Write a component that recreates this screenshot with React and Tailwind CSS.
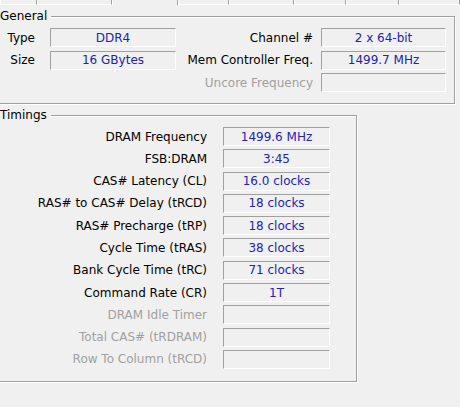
import React from "react";

const tabs = [
  { w: 37 },
  { w: 75 },
  { w: 66, active: true },
  { w: 51 },
  { w: 65 },
  { w: 52 },
  { w: 53 },
  { w: 61 },
];

const general = [
  { label: "Type", value: "DDR4", right: "Channel #", rightValue: "2 x 64-bit" },
  { label: "Size", value: "16 GBytes", right: "Mem Controller Freq.", rightValue: "1499.7 MHz" },
  { right: "Uncore Frequency", disabled: true },
];

const timings = [
  { label: "DRAM Frequency", value: "1499.6 MHz" },
  { label: "FSB:DRAM", value: "3:45" },
  { label: "CAS# Latency (CL)", value: "16.0 clocks" },
  { label: "RAS# to CAS# Delay (tRCD)", value: "18 clocks" },
  { label: "RAS# Precharge (tRP)", value: "18 clocks" },
  { label: "Cycle Time (tRAS)", value: "38 clocks" },
  { label: "Bank Cycle Time (tRC)", value: "71 clocks" },
  { label: "Command Rate (CR)", value: "1T" },
  { label: "DRAM Idle Timer", disabled: true },
  { label: "Total CAS# (tRDRAM)", disabled: true },
  { label: "Row To Column (tRCD)", disabled: true },
];

function Field({ value, className = "" }) {
  return (
    <div
      className={`h-[19px] border border-t-[#a0a0a0] border-l-[#a0a0a0] border-b-white border-r-white flex items-center justify-center text-[#2323b0] whitespace-nowrap ${className}`}
    >
      {value}
    </div>
  );
}

function GroupBox({ title, className = "", children }) {
  return (
    <div
      className={`relative ml-[-6px] pl-[5px] border border-[#a0a0a0] shadow-[inset_1px_1px_0_#fff,1px_1px_0_#fff] ${className}`}
    >
      <span className="absolute left-[5px] -top-[8px] bg-[#f0f0f0] pr-[4px] leading-[14px]">
        {title}
      </span>
      {children}
    </div>
  );
}

export default function App() {
  return (
    <div
      className="w-[460px] h-[407px] overflow-hidden bg-[#f0f0f0] text-[12px] text-black"
      style={{ fontFamily: '"DejaVu Sans", Verdana, sans-serif' }}
    >
      {/* tab strip, cut off at the top */}
      <div className="flex h-[5px]">
        {tabs.map((t, i) => (
          <div
            key={i}
            style={{ width: t.w }}
            className={`shrink-0 border-l border-r border-l-white border-r-[#a0a0a0] ${
              t.active ? "" : "border-b border-b-white"
            } ${i === 0 ? "border-l-transparent" : ""}`}
          />
        ))}
      </div>

      <GroupBox title="General" className="mt-[11px] w-[461px] pt-[11px] pb-[11px]">
        <div className="flex flex-col gap-y-[3.5px]">
          {general.map((r, i) => (
            <div key={i} className="flex items-center h-[19px]">
              <div className="w-[35px] text-right">{r.label}</div>
              {r.value ? (
                <Field value={r.value} className="ml-[15px] w-[126px]" />
              ) : (
                <div className="ml-[15px] w-[126px]" />
              )}
              <div
                className={`w-[137px] text-right whitespace-nowrap ${
                  r.disabled ? "text-[#a0a0a0]" : ""
                }`}
              >
                {r.right}
              </div>
              <Field value={r.rightValue} className="ml-[8px] w-[125px]" />
            </div>
          ))}
        </div>
      </GroupBox>

      <GroupBox title="Timings" className="mt-[11px] w-[363px] pt-[11px] pb-[12px]">
        <div className="flex flex-col gap-y-[3.3px]">
          {timings.map((r, i) => (
            <div key={i} className="flex items-center h-[19px]">
              <div
                className={`w-[207px] text-right whitespace-nowrap ${
                  r.disabled ? "text-[#a0a0a0]" : ""
                }`}
              >
                {r.label}
              </div>
              <Field value={r.value} className="ml-[16px] w-[107px]" />
            </div>
          ))}
        </div>
      </GroupBox>
    </div>
  );
}
